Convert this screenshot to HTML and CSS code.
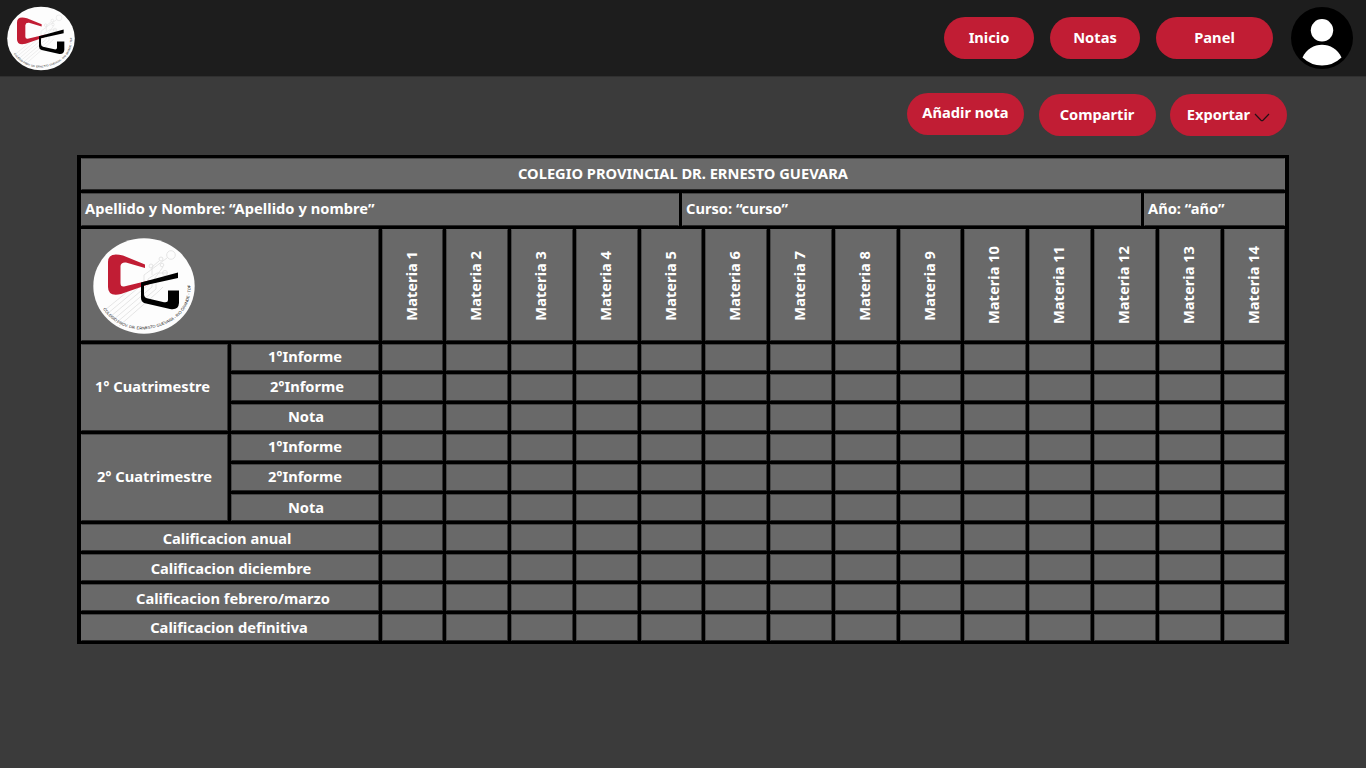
FILE: index.html
```html
<!DOCTYPE html>
<html lang="es">
<head>
<meta charset="utf-8">
<title>Notas</title>
<link rel="stylesheet" href="styles.css">
</head>
<body>
<svg class="defs" width="0" height="0" aria-hidden="true">
  <symbol id="logo" viewBox="0 0 102 96" overflow="visible">
    <ellipse cx="51" cy="48" rx="50.7" ry="47.7" fill="#fdfdfd"/>
    <g fill="none" stroke="#dedede" stroke-width=".8">
      <path d="M14 76 51 45V37L74 20M17 79 55 47V41L64 35H74M20 82 59 49V44L70 29M23 85 63 51V43M26 88 66 53 70 49M12 72 45 45M59 37V29L66 23"/>
      <circle cx="78" cy="17" r="4.3"/><circle cx="68" cy="21" r="2"/><circle cx="69" cy="27" r="1.8"/><circle cx="58" cy="28" r="2"/><circle cx="72" cy="35" r="2.5"/>
    </g>
    <path fill="#c11d34" d="M52 26.500 30 17.500Q15 13.500 15 24V49Q15 59 28 56L58 45.500V42L31 48.500Q27.500 49 27.500 45V28Q28 24 33 24.500L52 29.900Z"/>
    <path d="M85 34.500 48 44.500V60Q48 64 52 65.300L77 71Q85.500 72.500 86 65V52.500H75V62Q75 65 71 64.200L54 60.300Q51 59.500 51 56V47.500L85 40Z"/>
    <path id="rim" fill="none" d="M10 71Q25 92 51 91.500Q99 85 97.500 46"/>
    <text class="rim-text"><textPath href="#rim" textLength="120">COLEGIO PROV. DR. ERNESTO GUEVARA - RIO GRANDE - TDF</textPath></text>
  </symbol>
</svg>

<header class="topbar">
  <svg class="brand"><use href="#logo"/></svg>
  <nav class="nav">
    <a class="pill small">Inicio</a>
    <a class="pill small">Notas</a>
    <a class="pill">Panel</a>
    <svg class="avatar" viewBox="0 0 62 62">
      <circle cx="31" cy="31" r="31"/>
      <circle cx="31" cy="23.300" r="11.200" fill="#fff"/>
      <path d="M11.500 50.500C19 33.500 43 33.500 50.500 50.500Q42 58.500 31 58.500T11.500 50.500Z" fill="#fff"/>
    </svg>
  </nav>
</header>

<div class="actions">
  <button class="pill add">Añadir nota</button>
  <button class="pill">Compartir</button>
  <button class="pill export">Exportar<svg width="16" height="9" viewBox="0 0 16 9"><path d="M1 1 7 7.200Q8 8 9 7.200L15 1" fill="none" stroke="#241015" stroke-width="1.200"/></svg></button>
</div>

<main class="report">
  <div class="cell title">COLEGIO PROVINCIAL DR. ERNESTO GUEVARA</div>
  <div class="student">
    <div class="cell name">Apellido y Nombre: “Apellido y nombre”</div>
    <div class="cell">Curso: “curso”</div>
    <div class="cell">Año: “año”</div>
  </div>
  <div class="grades" id="grades">
    <div class="cell crest"><svg><use href="#logo"/></svg></div>
  </div>
</main>
<script src="script.js"></script>
</body>
</html>
```
FILE: styles.css
```css
* { box-sizing: border-box; }
body {
  margin: 0;
  height: 768px;
  overflow: hidden;
  background: #3b3b3b;
  color: #fff;
  font: bold 14.67px/20px "Noto Sans", "Open Sans", sans-serif;
}
.defs { position: absolute; }
.topbar {
  height: 77px;
  display: flex;
  justify-content: space-between;
  padding: 6px 13px 0 7px;
  background: #1d1d1d;
  border-bottom: 1px solid #303030;
}
.brand { width: 68px; height: 65px; overflow: visible; }
.rim-text { font: 4px "Liberation Sans", sans-serif; fill: #222; }
.nav { display: flex; gap: 16px; padding-top: 11px; }
.pill {
  display: flex;
  align-items: center;
  justify-content: center;
  width: 117px;
  height: 42px;
  padding: 0 0 2px;
  border: 0;
  border-radius: 21px;
  background: #c11d34;
  color: #fff;
  font: inherit;
}
.pill.small { width: 90px; }
.avatar { width: 62px; height: 62px; margin: -10px 0 0 2px; }
.actions {
  display: flex;
  justify-content: flex-end;
  gap: 14.5px;
  padding: 17px 79px 0 0;
  height: 78px;
}
.add { margin-top: -1px; padding-bottom: 4px; }
.export svg { margin: 6px 0 0 4px; }
.report {
  width: 1212px;
  margin-left: 77px;
  padding: 3px 4px;
  background: #000;
}
.cell {
  display: flex;
  align-items: center;
  justify-content: center;
  min-width: 0;
  background: #696969;
  border: solid;
  border-width: 1px;
  border-color: #444 #333 #262626 #484848;
  white-space: nowrap;
}
.title { height: 32px; margin-bottom: 3px; padding-bottom: 2px; }
.student { display: grid; grid-template-columns: 598px 459px 141px; gap: 3px; height: 33px; margin-bottom: 3px; }
.student .cell { justify-content: flex-start; padding: 0 0 4px 3px; }
.student .name { letter-spacing: .04px; }
.grades {
  display: grid;
  grid-template-columns: 147px 148px 61px 62px 62px 62px 61px 62px 62px 62px 61px 62px 62px 62px 62px 61px;
  grid-template-rows: 112px repeat(10, 27px);
  gap: 3px;
}
.crest { grid-column: span 2; justify-content: flex-start; padding: 1px 0 0 11px; }
.crest svg { width: 102px; height: 96px; overflow: visible; }
.subject { padding: 1px 4px 0 0; border-top-color: #696969; }
.subject span { writing-mode: vertical-rl; transform: rotate(180deg); }
.term { grid-row: span 3; }
.final { grid-column: span 2; }
.title, .student .cell, .crest, .term, .final { border-left-color: #696969; }
.title, .student .cell { border-right-color: #696969; }
.crest { border-top-color: #696969; }
```
FILE: script.js
```js
const grades = document.getElementById("grades");

function addCell(text, kind, dx = 0, dy = 0) {
  const cell = document.createElement("div");
  cell.className = "cell " + kind;
  const label = document.createElement("span");
  label.textContent = text;
  if (dx || dy) label.style.transform = `translate(${dx}px, ${dy}px)`;
  cell.append(label);
  grades.append(cell);
}

function addMarks() {
  for (let i = 0; i < 14; i++) addCell("", "mark");
}

for (let i = 1; i <= 14; i++) addCell("Materia " + i, "subject");

// Each label carries its optical offset inside the cell.
const terms = [
  ["1° Cuatrimestre", -2, -2, [["1°Informe", 0, -2], ["2°Informe", 2, -2], ["Nota", 1, -2]]],
  ["2° Cuatrimestre", 0, -2, [["1°Informe", 0, -2], ["2°Informe", 0, -2], ["Nota", 1, -1]]],
];
for (const [term, dx, dy, parts] of terms) {
  addCell(term, "term", dx, dy);
  for (const [part, px, py] of parts) {
    addCell(part, "part", px, py);
    addMarks();
  }
}

const finals = [["anual", -3, 0], ["diciembre", 1, 0], ["febrero/marzo", 3, 0], ["definitiva", -1, -1]];
for (const [name, dx, dy] of finals) {
  addCell("Calificacion " + name, "final", dx, dy);
  addMarks();
}
```
